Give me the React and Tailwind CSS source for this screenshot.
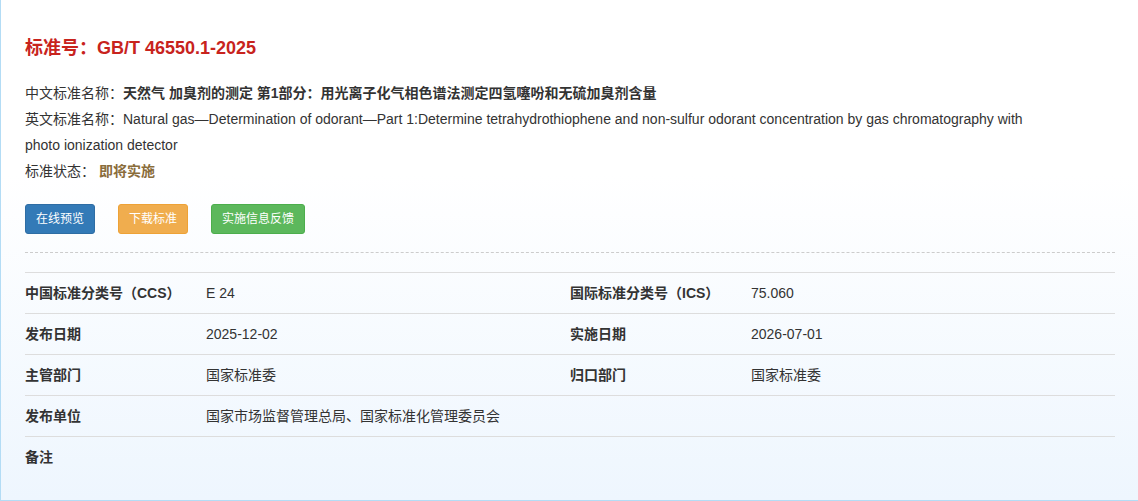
import React from 'react';

const rows = [
  [['中国标准分类号（CCS）', 'E 24'], ['国际标准分类号（ICS）', '75.060']],
  [['发布日期', '2025-12-02'], ['实施日期', '2026-07-01']],
  [['主管部门', '国家标准委'], ['归口部门', '国家标准委']],
  [['发布单位', '国家市场监督管理总局、国家标准化管理委员会']],
  [['备注', '']],
];

export default function App() {
  return (
    <div
      className="min-h-[501px] w-[1138px] border-l border-b border-[#b3dcf5] bg-gradient-to-b from-white from-35% to-[#eef6fe] pl-[24px] pr-[23px] pt-[38px] pb-[22px] text-[14px] text-[#333]"
      style={{ fontFamily: '"Liberation Sans", Arial, "Noto Sans CJK SC", sans-serif' }}
    >
      <h1 className="h-[20px] text-[18px] font-bold leading-[20px] text-[#c8231d]">
        标准号：GB/T 46550.1-2025
      </h1>

      <div className="mt-[22px] w-[1025px] leading-[26px]">
        <div>
          中文标准名称：<b>天然气 加臭剂的测定 第1部分：用光离子化气相色谱法测定四氢噻吩和无硫加臭剂含量</b>
        </div>
        <div>
          英文标准名称：Natural gas—Determination of odorant—Part 1:Determine tetrahydrothiophene and non-sulfur odorant concentration by gas chromatography with photo ionization detector
        </div>
        <div>
          标准状态：<span className="ml-[4px] font-bold text-[#8a6d3b]">即将实施</span>
        </div>
      </div>

      <div className="mt-[20px] flex gap-[23px]">
        <button className="h-[30px] rounded-[3px] border border-[#2e6da4] bg-[#337ab7] px-[10px] text-[12px] text-white">在线预览</button>
        <button className="h-[30px] rounded-[3px] border border-[#eea236] bg-[#f0ad4e] px-[10px] text-[12px] text-white">下载标准</button>
        <button className="h-[30px] rounded-[3px] border border-[#4cae4c] bg-[#5cb85c] px-[10px] text-[12px] text-white">实施信息反馈</button>
      </div>

      <div className="mt-[18px] border-t border-dashed border-[#cccccc]" />

      <div className="mt-[19px]">
        {rows.map((row, i) => (
          <div key={i} className="grid h-[41px] grid-cols-[181px_364px_181px_1fr] items-center border-t border-[#dddddd]">
            {row.map(([label, value], j) => (
              <React.Fragment key={j}>
                <div className="font-bold">{label}</div>
                <div>{value}</div>
              </React.Fragment>
            ))}
          </div>
        ))}
      </div>
    </div>
  );
}
